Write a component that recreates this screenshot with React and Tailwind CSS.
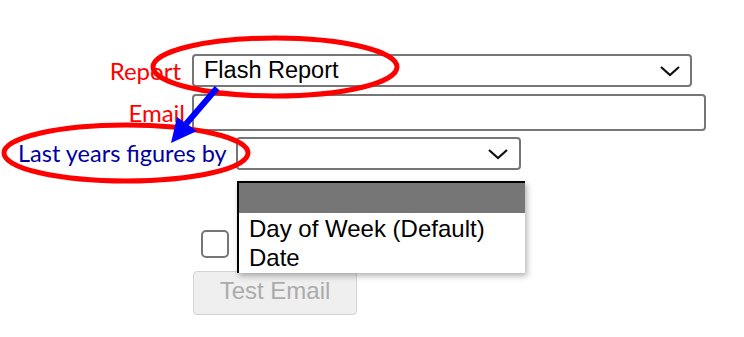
import { useState } from "react";

function Chevron() {
  return (
    <svg width="22" height="14" viewBox="0 0 22 14" className="shrink-0">
      <path d="M2 3 L11 11 L20 3" fill="none" stroke="#111" strokeWidth="2.2" />
    </svg>
  );
}

export default function App() {
  const [open] = useState(true);

  return (
    <div className="relative w-[744px] h-[337px] bg-white overflow-hidden font-['Liberation_Sans',Arial,sans-serif] text-[23.5px] text-black">
      <div className="flex flex-col pt-[54px]">
        {/* report */}
        <div className="flex items-center h-[33px]">
          <div className="w-[181px] text-right text-[#ff0000] text-[24px] leading-none font-['Lato',sans-serif]">
            Report
          </div>
          <div className="ml-[11px] w-[500px] h-[33px] flex items-center justify-between pl-[10px] pr-[9px] border-2 border-[#767676] rounded-[4px]">
            <span className="leading-none">Flash Report</span>
            <Chevron />
          </div>
        </div>

        {/* email */}
        <div className="flex items-center h-[37px] mt-[7px]">
          <div className="w-[185px] text-right text-[#ff0000] text-[24px] leading-none font-['Lato',sans-serif]">
            Email
          </div>
          <div className="ml-[7px] w-[514px] h-[37px] border-2 border-[#767676] rounded-[4px]" />
        </div>

        {/* last years */}
        <div className="flex items-center h-[33px] mt-[6px] pl-[18px]">
          <div className="text-[#0000a0] text-[23.5px] leading-none font-['Lato',sans-serif] whitespace-nowrap">
            Last years figures by
          </div>
          <div className="ml-auto mr-[223px] w-[285px] h-[33px] flex items-center justify-end pr-[10px] border-2 border-[#767676] rounded-[4px]">
            <Chevron />
          </div>
        </div>

        {/* checkbox (its label sits under the open list) */}
        <div className="flex items-center mt-[60px] pl-[201px]">
          <div className="w-[28px] h-[28px] border-2 border-[#767676] rounded-[5px] bg-white" />
        </div>

        {/* button */}
        <div className="pl-[193px] mt-[13px]">
          <button
            disabled
            className="w-[164px] h-[44px] pb-[5px] bg-[#efefef] border border-[#d4d4d4] rounded-[4px] text-[#ababab] text-[24px] leading-none"
          >
            Test Email
          </button>
        </div>
      </div>

      {/* open select list */}
      {open && (
        <div className="absolute left-[237px] top-[181px] w-[288px] h-[92px] bg-white border-l-2 border-t-2 border-black shadow-[2px_3px_6px_rgba(0,0,0,0.3)] text-[24px]">
          <div className="h-[30px] bg-[#767676]" />
          <div className="pl-[10px] h-[29px] flex items-center leading-none pt-[2px]">Day of Week (Default)</div>
          <div className="pl-[10px] h-[29px] flex items-center leading-none pt-[2px]">Date</div>
        </div>
      )}

      {/* annotation marks */}
      <svg className="absolute inset-0 pointer-events-none" width="744" height="337">
        <ellipse cx="275" cy="67" rx="122" ry="29" fill="none" stroke="#ff0000" strokeWidth="5" />
        <ellipse cx="126" cy="153" rx="122" ry="28" fill="none" stroke="#ff0000" strokeWidth="5" />
        <line x1="217" y1="88" x2="186" y2="124" stroke="#0000ff" strokeWidth="6" />
        <polygon points="171,143 177,117 197,131" fill="#0000ff" />
      </svg>
    </div>
  );
}
